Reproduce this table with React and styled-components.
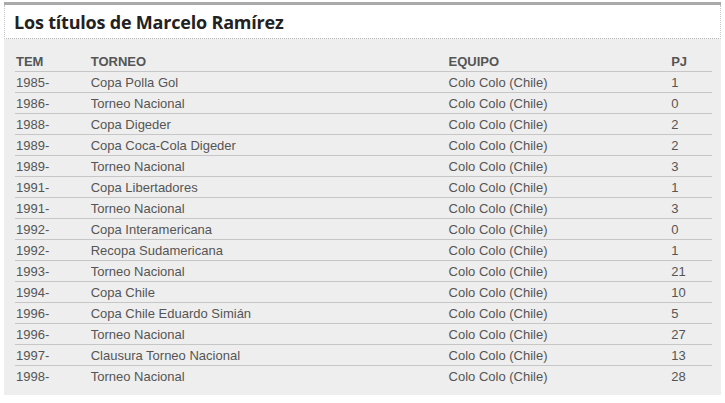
import React from "react";
import styled, { createGlobalStyle } from "styled-components";

const GlobalStyle = createGlobalStyle`
  body {
    margin: 0;
    background: #fff;
    font-family: "Liberation Sans", Arial, sans-serif;
  }
`;

const Box = styled.div`
  margin: 2px 4px 0 4px;
  width: 717px;
  border-top: 3px solid #aaaaaa;
`;

const Header = styled.div`
  background: #fff;
  border-left: 1px dotted #c4c4c4;
  border-right: 1px dotted #c4c4c4;
  border-bottom: 1px dotted #b4b4b4;
  height: 33px;
  padding-left: 9px;
  display: flex;
  align-items: center;
`;

const Title = styled.h2`
  margin: 0;
  font-family: "Open Sans", "Noto Sans", sans-serif;
  font-size: 18px;
  font-weight: 700;
  color: #222;
  letter-spacing: -0.2px;
`;

const Body = styled.div`
  background: #eeeeee;
  padding: 12px 9px 9px 11px;
`;

const Table = styled.table`
  width: 697px;
  border-collapse: collapse;
  font-size: 13px;
  color: #555;
`;

const Th = styled.th`
  text-align: left;
  font-weight: 700;
  color: #555;
  height: 20px;
  padding: 0 0 0 1px;
  width: ${(p) => p.$w}px;
  border-bottom: 1px solid #c6c6c6;
`;

const Tr = styled.tr`
  border-bottom: 1px solid #c6c6c6;
  &:last-child {
    border-bottom: none;
  }
`;

const Td = styled.td`
  height: 20px;
  padding: 0 0 0 1px;
  vertical-align: middle;
`;

const rows = [
  ["1985-", "Copa Polla Gol", "1"],
  ["1986-", "Torneo Nacional", "0"],
  ["1988-", "Copa Digeder", "2"],
  ["1989-", "Copa Coca-Cola Digeder", "2"],
  ["1989-", "Torneo Nacional", "3"],
  ["1991-", "Copa Libertadores", "1"],
  ["1991-", "Torneo Nacional", "3"],
  ["1992-", "Copa Interamericana", "0"],
  ["1992-", "Recopa Sudamericana", "1"],
  ["1993-", "Torneo Nacional", "21"],
  ["1994-", "Copa Chile", "10"],
  ["1996-", "Copa Chile Eduardo Simián", "5"],
  ["1996-", "Torneo Nacional", "27"],
  ["1997-", "Clausura Torneo Nacional", "13"],
  ["1998-", "Torneo Nacional", "28"],
];

const App = () => {
  return (
    <>
      <GlobalStyle />
      <Box>
        <Header>
          <Title>Los títulos de Marcelo Ramírez</Title>
        </Header>
        <Body>
          <Table>
            <thead>
              <tr>
                <Th $w={74}>TEM</Th>
                <Th $w={359}>TORNEO</Th>
                <Th $w={223}>EQUIPO</Th>
                <Th $w={41}>PJ</Th>
              </tr>
            </thead>
            <tbody>
              {rows.map(([year, torneo, pj], i) => (
                <Tr key={i}>
                  <Td>{year}</Td>
                  <Td>{torneo}</Td>
                  <Td>Colo Colo (Chile)</Td>
                  <Td>{pj}</Td>
                </Tr>
              ))}
            </tbody>
          </Table>
        </Body>
      </Box>
    </>
  );
};

export default App;
